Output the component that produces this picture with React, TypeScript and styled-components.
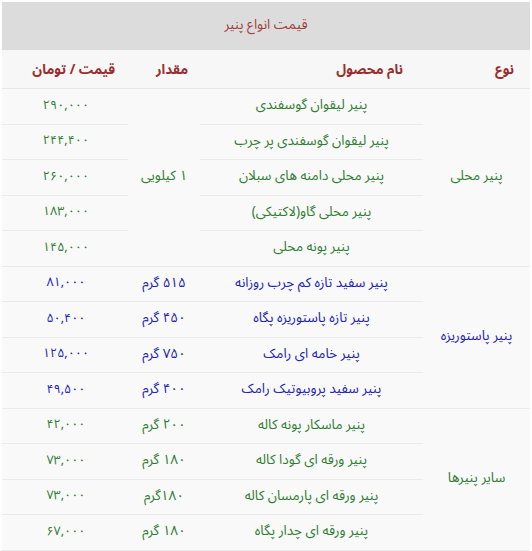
import styled, { createGlobalStyle } from 'styled-components'

const GlobalStyle = createGlobalStyle`
   html, body {
      margin: 0;
      padding: 0;
      background: #fff;
      overflow: hidden;
   }
   body {
      font-family: "Noto Sans Arabic", "DejaVu Sans", sans-serif;
   }
`

type Tone = 'green' | 'blue'

const toneColor: Record<Tone, string> = {
   green: '#2f7d32',
   blue: '#2222b8',
}

const Page = styled.div`
   padding: 2px;
   direction: rtl;
`

const Table = styled.table`
   width: 528px;
   border-collapse: collapse;
   table-layout: fixed;
   background: #f9f9f9;
   font-size: 13.5px;
`

const Caption = styled.th`
   box-sizing: border-box;
   height: 48px;
   padding: 0 0 3px;
   background: #dcdcdc;
   color: #a0403c;
   font-weight: normal;
   font-size: 13.5px;
   text-align: center;
`

const HeadCell = styled.th<{ $pad: number }>`
   height: 38px;
   padding: 0 ${(p) => p.$pad}px 0 0;
   background: #f7f7f7;
   color: #9b2d2d;
   font-weight: bold;
   font-size: 13.5px;
   text-align: right;
   border-bottom: 1px solid #e6e6e6;
`

const Cell = styled.td<{ $tone: Tone }>`
   box-sizing: border-box;
   height: 35.5px;
   padding: 0 4px 3px;
   text-align: center;
   color: ${(p) => toneColor[p.$tone]};
   border-bottom: 1px solid #ebebeb;
   white-space: nowrap;
`

const Price = styled(Cell)`
   font-size: 12.5px;
   padding-left: 6px;
`

type Item = { name: string; qty?: string; price: string }

type Group = { type: string; tone: Tone; sharedQty?: string; items: Item[] }

const groups: Group[] = [
   {
      type: 'پنیر محلی',
      tone: 'green',
      sharedQty: '۱ کیلویی',
      items: [
         { name: 'پنیر لیقوان گوسفندی', price: '۲۹۰,۰۰۰' },
         { name: 'پنیر لیقوان گوسفندی پر چرب', price: '۲۴۴,۴۰۰' },
         { name: 'پنیر محلی دامنه های سبلان', price: '۲۶۰,۰۰۰' },
         { name: 'پنیر محلی گاو(لاکتیکی)', price: '۱۸۳,۰۰۰' },
         { name: 'پنیر پونه محلی', price: '۱۴۵,۰۰۰' },
      ],
   },
   {
      type: 'پنیر پاستوریزه',
      tone: 'blue',
      items: [
         { name: 'پنیر سفید تازه کم چرب روزانه', qty: '۵۱۵ گرم', price: '۸۱,۰۰۰' },
         { name: 'پنیر تازه پاستوریزه پگاه', qty: '۴۵۰ گرم', price: '۵۰,۴۰۰' },
         { name: 'پنیر خامه ای رامک', qty: '۷۵۰ گرم', price: '۱۲۵,۰۰۰' },
         { name: 'پنیر سفید پروبیوتیک رامک', qty: '۴۰۰ گرم', price: '۴۹,۵۰۰' },
      ],
   },
   {
      type: 'سایر پنیرها',
      tone: 'green',
      items: [
         { name: 'پنیر ماسکار پونه کاله', qty: '۲۰۰ گرم', price: '۴۲,۰۰۰' },
         { name: 'پنیر ورقه ای گودا کاله', qty: '۱۸۰ گرم', price: '۷۳,۰۰۰' },
         { name: 'پنیر ورقه ای پارمسان کاله', qty: '۱۸۰گرم', price: '۷۳,۰۰۰' },
         { name: 'پنیر ورقه ای چدار پگاه', qty: '۱۸۰ گرم', price: '۶۷,۰۰۰' },
      ],
   },
]

const App = () => {
   return (
      <Page>
         <GlobalStyle />
         <Table>
            <colgroup>
               <col style={{ width: 107 }} />
               <col style={{ width: 223 }} />
               <col style={{ width: 72 }} />
               <col style={{ width: 126 }} />
            </colgroup>
            <thead>
               <tr>
                  <Caption colSpan={4}>قیمت انواع پنیر</Caption>
               </tr>
               <tr>
                  <HeadCell $pad={16}>نوع</HeadCell>
                  <HeadCell $pad={20}>نام محصول</HeadCell>
                  <HeadCell $pad={12}>مقدار</HeadCell>
                  <HeadCell $pad={13}>قیمت / تومان</HeadCell>
               </tr>
            </thead>
            <tbody>
               {groups.map((g) =>
                  g.items.map((item, i) => (
                     <tr key={g.type + i}>
                        {i === 0 && (
                           <Cell $tone={g.tone} rowSpan={g.items.length}>
                              {g.type}
                           </Cell>
                        )}
                        <Cell $tone={g.tone}>{item.name}</Cell>
                        {g.sharedQty ? (
                           i === 0 && (
                              <Cell $tone={g.tone} rowSpan={g.items.length}>
                                 {g.sharedQty}
                              </Cell>
                           )
                        ) : (
                           <Cell $tone={g.tone}>{item.qty}</Cell>
                        )}
                        <Price $tone={g.tone}>{item.price}</Price>
                     </tr>
                  ))
               )}
            </tbody>
         </Table>
      </Page>
   )
}

export default App
